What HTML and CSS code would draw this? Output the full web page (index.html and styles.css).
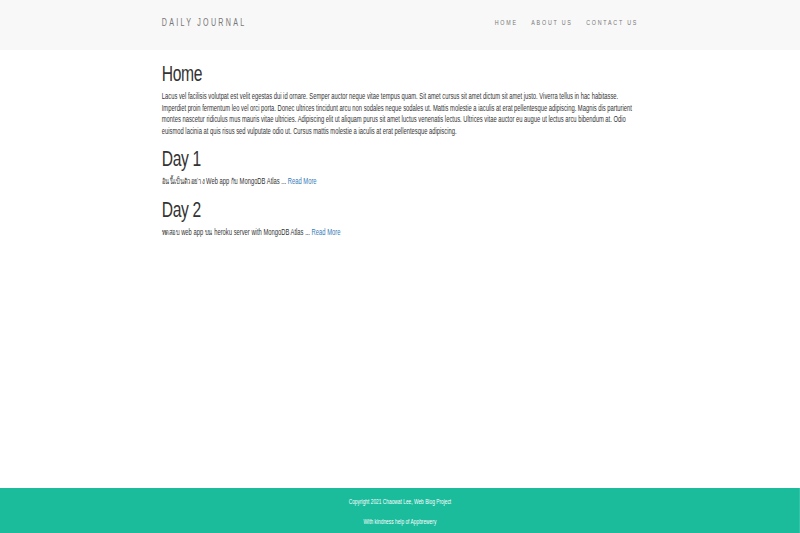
FILE: index.html
```html
<!DOCTYPE html>
<html>
<head>
<meta charset="utf-8">
<link rel="stylesheet" href="styles.css">
<title>Daily Journal</title>
</head>
<body>
<div class="page">
  <header class="navbar">
    <div class="container nav-inner">
      <span class="brand">DAILY JOURNAL</span>
      <nav class="nav-links">
        <a href="#">HOME</a>
        <a href="#">ABOUT US</a>
        <a href="#">CONTACT US</a>
      </nav>
    </div>
  </header>
  <main class="container content">
    <h1>Home</h1>
    <p>Lacus vel facilisis volutpat est velit egestas dui id ornare. Semper auctor neque vitae tempus quam. Sit amet cursus sit amet dictum sit amet justo. Viverra tellus in hac habitasse. Imperdiet proin fermentum leo vel orci porta. Donec ultrices tincidunt arcu non sodales neque sodales ut. Mattis molestie a iaculis at erat pellentesque adipiscing. Magnis dis parturient montes nascetur ridiculus mus mauris vitae ultricies. Adipiscing elit ut aliquam purus sit amet luctus venenatis lectus. Ultrices vitae auctor eu augue ut lectus arcu bibendum at. Odio euismod lacinia at quis risus sed vulputate odio ut. Cursus mattis molestie a iaculis at erat pellentesque adipiscing.</p>
    <h1 class="post-title">Day 1</h1>
    <p class="excerpt">อันนี้เป็นตัวอย่าง Web app กับ MongoDB Atlas ... <a href="#">Read More</a></p>
    <h1 class="post-title">Day 2</h1>
    <p class="excerpt">ทดสอบ web app บน heroku server with MongoDB Atlas ... <a href="#">Read More</a></p>
  </main>
  <footer class="footer">
    <p>Copyright 2021 Chaowat Lee, Web Blog Project</p>
    <p>With kindness help of Appbrewery</p>
  </footer>
</div>
</body>
</html>
```
FILE: styles.css
```css
html, body {
  margin: 0;
  padding: 0;
  overflow: hidden;
}
body {
  font-family: "Liberation Sans", Arial, sans-serif;
  color: #333;
  background: #fff;
}
/* the whole page is horizontally condensed, as in the reference */
.page {
  width: 1125px;
  min-height: 533px;
  display: flex;
  flex-direction: column;
  transform: scaleX(0.711);
  transform-origin: 0 0;
}
.container {
  width: 670px;
  margin: 0 auto;
}
.navbar {
  background: #f8f8f8;
  height: 50px;
}
.nav-inner {
  display: flex;
  justify-content: space-between;
  align-items: center;
  height: 44px;
}
.brand {
  font-size: 10px;
  letter-spacing: 3.2px;
  color: #777;
}
.nav-links {
  display: flex;
  gap: 19px;
}
.nav-links a {
  font-size: 7.5px;
  letter-spacing: 2.5px;
  color: #777;
  text-decoration: none;
}
.content {
  flex: 1;
  padding-top: 2px;
}
h1 {
  font-size: 22px;
  font-weight: 400;
  color: #333;
  margin: 10px 0 5px;
  line-height: 1.1;
  letter-spacing: -0.5px;
}
.content p {
  font-size: 8.2px;
  line-height: 11.5px;
  margin: 0;
}
.content p.excerpt {
  height: 11.5px;
}
.content a {
  color: #337ab7;
  text-decoration: none;
}
.footer {
  background: #1abc9c;
  height: 45px;
  display: flex;
  flex-direction: column;
  align-items: center;
  justify-content: center;
  gap: 13px;
  padding-top: 1px;
  box-sizing: border-box;
}
.footer p {
  margin: 0;
  color: #fff;
  font-size: 6.8px;
}
```
